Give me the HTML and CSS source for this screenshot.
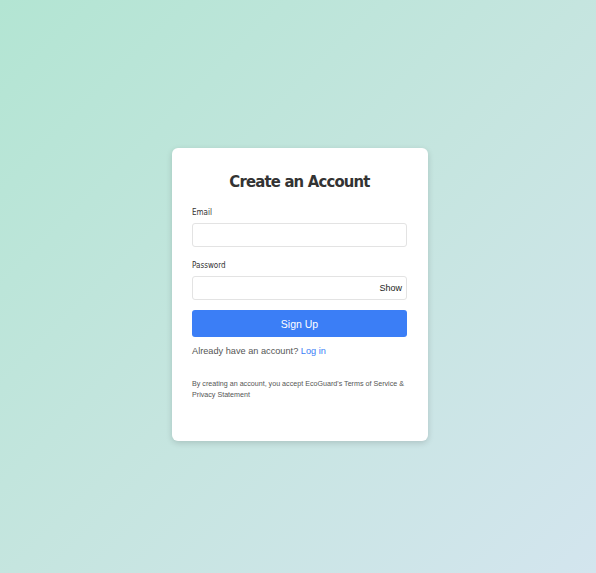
FILE: index.html
```html
<!DOCTYPE html>
<html lang="en">
<head>
<meta charset="utf-8">
<title>Create an Account</title>
<link rel="stylesheet" href="styles.css">
</head>
<body>
<main class="page">
  <form class="card">
    <h1 class="title">Create an Account</h1>
    <label class="label" for="email">Email</label>
    <input class="input input-email" id="email" type="email">
    <label class="label" for="password">Password</label>
    <div class="pw-wrap">
      <input class="input" id="password" type="password">
      <button type="button" class="show">Show</button>
    </div>
    <button type="button" class="submit">Sign Up</button>
    <p class="login">Already have an account? <a href="#" class="link">Log in</a></p>
    <p class="terms">By creating an account, you accept EcoGuard's Terms of Service &amp; Privacy Statement</p>
  </form>
</main>
</body>
</html>
```
FILE: styles.css
```css
html, body {
  margin: 0;
  padding: 0;
  height: 100%;
}
body {
  background: linear-gradient(135deg, #b3e5d3 0%, #c5e5df 50%, #d3e5ee 100%);
  font-family: "Liberation Sans", Arial, sans-serif;
}
.page {
  height: 573px;
  display: flex;
  justify-content: center;
  align-items: flex-start;
  padding: 148px 0 0 4px;
  box-sizing: border-box;
}
.card {
  width: 256px;
  height: 293px;
  box-sizing: border-box;
  background: #fff;
  border-radius: 6px;
  box-shadow: 0 2px 6px rgba(0, 0, 0, 0.15);
  padding: 24px 21px 0 20px;
  display: flex;
  flex-direction: column;
}
.title {
  margin: 0 0 16px;
  text-align: center;
  font-family: "DejaVu Sans Condensed", "DejaVu Sans", Verdana, sans-serif;
  font-stretch: condensed;
  font-weight: bold;
  font-size: 16.5px;
  letter-spacing: -0.8px;
  color: #333;
  line-height: 20px;
}
.label {
  font-family: "DejaVu Sans Condensed", "DejaVu Sans", Verdana, sans-serif;
  font-stretch: condensed;
  font-size: 8px;
  color: #333;
  line-height: 10px;
  margin-bottom: 5px;
}
.input {
  box-sizing: border-box;
  width: 100%;
  height: 24px;
  border: 1px solid #e3e3e3;
  border-radius: 3px;
  margin: 0 0 12px;
  padding: 0 6px;
  background: #fff;
}
.input-email {
  margin-bottom: 14px;
}
.pw-wrap {
  position: relative;
}
.show {
  position: absolute;
  right: 5px;
  top: 6px;
  border: 0;
  background: none;
  padding: 0;
  font-family: "Liberation Sans", Arial, sans-serif;
  font-size: 9px;
  color: #222;
  line-height: 12px;
}
.submit {
  height: 27px;
  border: 0;
  border-radius: 3px;
  background: #3b7ef6;
  color: #fff;
  font-family: "Liberation Sans", Arial, sans-serif;
  font-size: 10.5px;
  margin-top: -2px;
}
.login {
  margin: 8px 0 0;
  font-size: 9.2px;
  color: #555;
  line-height: 13px;
}
.link {
  color: #3b7ef6;
  text-decoration: none;
}
.terms {
  margin: 21px 0 0;
  font-size: 7.15px;
  line-height: 11px;
  color: #555;
}
```
